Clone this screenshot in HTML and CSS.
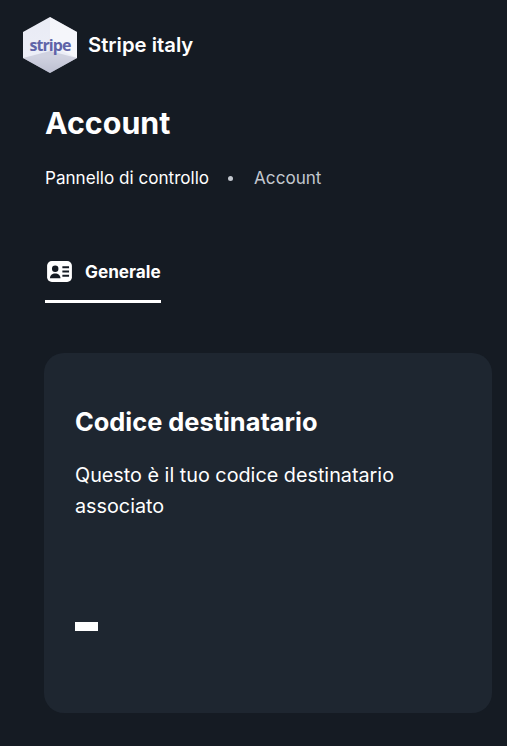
FILE: index.html
```html
<!DOCTYPE html>
<html lang="it">

<head>
    <meta charset="UTF-8">
    <title>Account</title>
    <link rel="stylesheet" href="styles.css">
</head>

<body>
    <div class="brand">
        <svg class="brand-logo" viewBox="0 0 54 56" width="54" height="56">
            <defs>
                <linearGradient id="cube" x1="0" y1="0" x2="0" y2="1">
                    <stop offset="0" stop-color="#e9ebf5" />
                    <stop offset="0.7" stop-color="#eceef7" />
                    <stop offset="1" stop-color="#c3c6d6" />
                </linearGradient>
            </defs>
            <polygon points="27,0 54,15 54,41 27,56 0,41 0,15" fill="url(#cube)" />
            <polygon points="27,0 54,15 54,41 27,28" fill="#fff" opacity="0.5" />
            <polygon points="0,41 27,34 54,41 27,56" fill="#b9bccd" opacity="0.55" />
            <text x="27" y="34" text-anchor="middle" class="brand-logo-text">stripe</text>
        </svg>
        <span class="brand-name">Stripe italy</span>
    </div>

    <div class="content">
        <h1 class="page-title">Account</h1>
        <div class="crumbs">
            <span>Pannello di controllo</span>
            <span class="crumbs-dot"></span>
            <span class="crumbs-current">Account</span>
        </div>

        <div class="tabs">
            <div class="tab">
                <svg class="tab-icon" viewBox="0 0 26 22" width="25" height="21">
                    <rect width="26" height="22" rx="5" fill="#fff" />
                    <circle cx="8.500" cy="8" r="3.400" fill="#151b23" />
                    <path d="M3 18c0-3.300 2.400-5 5.500-5s5.500 1.700 5.500 5z" fill="#151b23" />
                    <path d="M16 6.500h7M16 11h7M16 15.500h7" stroke="#151b23" stroke-width="2.200" />
                </svg>
                <span>Generale</span>
            </div>
        </div>

        <div class="card">
            <h2 class="card-title">Codice destinatario</h2>
            <p class="card-text">Questo è il tuo codice destinatario associato</p>
            <div class="card-value"></div>
        </div>
    </div>
</body>

</html>
```

FILE: styles.css
```css
* {
    padding: 0px;
    margin: 0px;
    box-sizing: border-box;
}

body {
    background: #151b23;
    color: #ffffff;
    font-family: "Inter", "Liberation Sans", sans-serif;
    height: 746px;
    overflow: hidden;
}

/* logo */
.brand {
    display: flex;
    align-items: center;
    gap: 11px;
    padding: 17px 0px 0px 23px;
}

.brand-logo-text {
    font-family: "Open Sans", sans-serif;
    font-size: 16px;
    font-weight: 700;
    letter-spacing: -0.9px;
    fill: #5f64a8;
}

.brand-name {
    padding-bottom: 2px;
    font-size: 20.300px;
    font-weight: 600;
}

.content {
    padding: 0px 15px 0px 44px;
}

.page-title {
    margin-top: 32px;
    padding-left: 1px;
    font-size: 30.400px;
    line-height: 36px;
    font-weight: 700;
}

/* breadcrumb */
.crumbs {
    display: flex;
    align-items: center;
    margin-top: 26px;
    padding-left: 1px;
    font-size: 17.100px;
    line-height: 22px;
}

.crumbs-dot {
    width: 5px;
    height: 5px;
    margin: 0px 21px 0px 19px;
    border-radius: 50%;
    background: #c2c7ce;
}

.crumbs-current {
    color: #c2c7ce;
}

/* tab */
.tabs {
    display: flex;
    margin-top: 67px;
    padding-left: 1px;
}

.tab {
    display: flex;
    align-items: center;
    gap: 13px;
    width: 116px;
    height: 47px;
    padding: 0px 0px 13px 2px;
    border-bottom: 3px solid #ffffff;
    font-size: 17.200px;
    font-weight: 700;
}

/* card */
.card {
    height: 360px;
    margin-top: 50px;
    padding: 54px 30px 0px 31px;
    border-radius: 20px;
    background: #1e2630;
}

.card-title {
    font-size: 25.400px;
    line-height: 30px;
    font-weight: 700;
}

.card-text {
    margin-top: 23px;
    font-size: 19.800px;
    line-height: 31px;
}

.card-value {
    width: 23px;
    height: 9px;
    margin-top: 100px;
    background: #ffffff;
}
```
